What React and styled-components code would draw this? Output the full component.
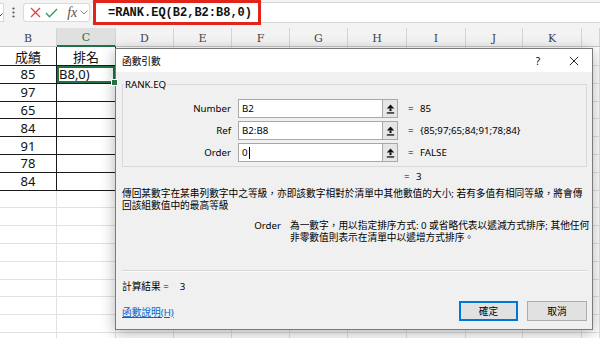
import React from "react";
import styled, { createGlobalStyle } from "styled-components";

const GlobalStyle = createGlobalStyle`
  html, body { margin: 0; padding: 0; background: #fff; overflow: hidden; }
  #root { width: 600px; height: 338px; }
`;

const Screen = styled.div`
  position: relative;
  width: 600px;
  height: 338px;
  overflow: hidden;
  background: #fff;
`;

/* ---------- formula bar ---------- */
const Top = styled.div`
  background: #f3f3f3;
`;

const FormulaBar = styled.div`
  display: flex;
  align-items: center;
  height: 25px;
`;

const NameBoxTip = styled.div`
  width: 4px;
  height: 19px;
  background: #fff;
  border: 1px solid #d6d6d6;
  border-left: none;
  box-sizing: border-box;
  display: flex;
  align-items: center;
  overflow: hidden;
`;

const Dots = styled.div`
  width: 19px;
  display: flex;
  justify-content: center;
`;

const FxBox = styled.div`
  display: flex;
  align-items: center;
  width: 67px;
  height: 19px;
  box-sizing: border-box;
  background: #fff;
  border: 1px solid #dadada;
  border-radius: 3px;
  padding-left: 5px;
`;

const IconSlot = styled.span`
  display: inline-flex;
  align-items: center;
  justify-content: center;
  width: ${(p) => p.$w}px;
`;

const FxText = styled.span`
  font-family: "Liberation Serif", serif;
  font-style: italic;
  font-size: 14px;
  color: #555;
  width: 16px;
  text-align: center;
  margin-left: 4px;
`;

const FormulaInput = styled.div`
  flex: 1;
  height: 21px;
  margin-left: 2px;
  background: #fff;
  border-top: 1px solid #d6d6d6;
  border-bottom: 1px solid #d6d6d6;
  box-sizing: border-box;
  display: flex;
  align-items: center;
`;

const FormulaHighlight = styled.div`
  flex: none;
  width: 168px;
  height: 25px;
  margin-left: 1px;
  box-sizing: border-box;
  border: 3px solid #e1251b;
  padding-left: 12px;
  display: flex;
  align-items: center;
  font-family: "Liberation Mono", monospace;
  font-weight: bold;
  font-size: 12px;
  color: #111;
  white-space: nowrap;
`;

/* ---------- sheet ---------- */
const Sheet = styled.div`
  display: grid;
  grid-template-columns: 57px 59px 58px 58px 58px 58px 59px 59px 57px 59px 1fr;
  grid-template-rows: 19px 19px repeat(16, 17.8px);
  padding-top: 3px;
  background: #f3f3f3;
`;

const HeaderCell = styled.div`
  display: flex;
  align-items: center;
  justify-content: center;
  padding-top: 2px;
  box-sizing: border-box;
  background: ${(p) => (p.$active ? "#e0e0e0" : "#f3f3f3")};
  border-right: 1px solid #d4d4d4;
  border-bottom: ${(p) => (p.$active ? "2px solid #217346" : "1px solid #c6c6c6")};
  font-family: "DejaVu Serif", serif;
  font-size: 11px;
  color: ${(p) => (p.$active ? "#217346" : "#444")};
`;

const Cell = styled.div`
  position: relative;
  display: flex;
  align-items: center;
  justify-content: ${(p) => (p.$left ? "flex-start" : "center")};
  padding-left: ${(p) => (p.$left ? "2px" : "0")};
  box-sizing: border-box;
  background: #fff;
  border-right: 1px solid ${(p) => (p.$table ? "#1a1a1a" : "#e1e1e1")};
  border-bottom: 1px solid ${(p) => (p.$table ? "#1a1a1a" : "#e1e1e1")};
  font-family: "Noto Sans", "Noto Sans CJK TC", sans-serif;
  font-size: 13px;
  color: #111;
  white-space: nowrap;
  ${(p) =>
    p.$selected &&
    `
    box-shadow: inset 0 0 0 2px #217346;
    &::after {
      content: "";
      position: absolute;
      right: -3px;
      bottom: -3px;
      width: 5px;
      height: 5px;
      background: #217346;
      border: 1px solid #fff;
      z-index: 2;
    }
  `}
`;

/* ---------- dialog ---------- */
const Dialog = styled.div`
  position: absolute;
  left: 115px;
  top: 48px;
  width: 478px;
  height: 282px;
  box-sizing: border-box;
  border: 1px solid #7a7a7a;
  background: #f0f0f0;
  box-shadow: 0 3px 14px rgba(0, 0, 0, 0.3);
  display: flex;
  flex-direction: column;
  font-family: "Noto Sans", "Noto Sans CJK TC", sans-serif;
  font-size: 9.7px;
  color: #000;
`;

const TitleBar = styled.div`
  height: 23px;
  flex: none;
  background: #fff;
  display: flex;
  align-items: center;
  padding-left: 6px;
`;

const TitleText = styled.span`
  flex: 1;
`;

const TitleButton = styled.span`
  width: 36px;
  display: flex;
  justify-content: center;
  align-items: center;
  font-size: 10px;
`;

const Body = styled.div`
  flex: 1;
  display: flex;
  flex-direction: column;
  padding: 6px 5px 7px 6px;
`;

const Group = styled.fieldset`
  margin: 0;
  padding: 8px 0 4px 0;
  border: 1px solid #d9d9d9;
  display: flex;
  flex-direction: column;
  gap: 3px;
`;

const Legend = styled.legend`
  padding: 0 1px;
  margin-left: 1px;
  line-height: 13px;
`;

const ArgRow = styled.div`
  display: flex;
  align-items: center;
  height: 19px;
`;

const ArgLabel = styled.span`
  width: 108px;
  text-align: right;
  margin-right: 7px;
`;

const ArgInput = styled.div`
  width: 144px;
  height: 19px;
  box-sizing: border-box;
  background: #fff;
  border: 1px solid #a8a8a8;
  border-right: none;
  display: flex;
  align-items: center;
  padding-left: 3px;
`;

const Caret = styled.span`
  display: inline-block;
  width: 1px;
  height: 12px;
  background: #000;
  margin-left: 1px;
`;

const CollapseButton = styled.div`
  width: 16px;
  height: 19px;
  box-sizing: border-box;
  background: #e6e6e6;
  border: 1px solid #a8a8a8;
  display: flex;
  align-items: center;
  justify-content: center;
`;

const ArgValue = styled.span`
  margin-left: 10px;
  white-space: nowrap;
`;

const Eq = styled.span`
  display: inline-block;
  width: 12px;
`;

const ResultRow = styled.div`
  height: 12px;
  margin-top: 3px;
  padding-left: 282px;
  display: flex;
  align-items: center;
`;

const Desc = styled.div`
  margin-top: 6px;
  line-height: 12px;
`;

const Line = styled.div`
  white-space: nowrap;
`;

const ArgDesc = styled.div`
  display: flex;
  margin-top: 8px;
  line-height: 12px;
`;

const ArgDescName = styled.span`
  width: 159px;
  text-align: right;
  margin-right: 9px;
  flex: none;
`;

const Separator = styled.div`
  margin-top: 26px;
  border-top: 1px solid #d7d7d7;
  border-bottom: 1px solid #fbfbfb;
`;

const Formula = styled.div`
  margin-top: 9px;
  line-height: 12px;
  display: flex;
`;

const ResultNum = styled.span`
  margin-left: 11px;
`;

const Footer = styled.div`
  margin-top: 8px;
  display: flex;
  align-items: center;
`;

const Link = styled.a`
  flex: 1;
  color: #0066cc;
  text-decoration: underline;
  margin-top: 2px;
`;

const Button = styled.button`
  width: ${(p) => p.$w}px;
  height: 20px;
  margin-left: ${(p) => p.$ml || 0}px;
  box-sizing: border-box;
  background: #e1e1e1;
  border: ${(p) => (p.$primary ? "2px solid #0078d7" : "1px solid #adadad")};
  font-family: "Noto Sans CJK TC", sans-serif;
  font-size: 9.7px;
  color: #000;
  padding: 0;
`;

/* ---------- icons ---------- */
const Chevron = ({ color = "#666" }) => (
  <svg width="8" height="5" viewBox="0 0 8 5">
    <path d="M0.5 0.5 L4 4 L7.5 0.5" fill="none" stroke={color} strokeWidth="1" />
  </svg>
);

const VDots = () => (
  <svg width="3" height="11" viewBox="0 0 3 11">
    <circle cx="1.5" cy="1.5" r="1.1" fill="#555" />
    <circle cx="1.5" cy="5.5" r="1.1" fill="#555" />
    <circle cx="1.5" cy="9.5" r="1.1" fill="#555" />
  </svg>
);

const CrossIcon = ({ size = 11, color = "#e0443e", w = 1.3 }) => (
  <svg width={size} height={size} viewBox="0 0 11 11">
    <path d="M1 1 L10 10 M10 1 L1 10" stroke={color} strokeWidth={w} fill="none" />
  </svg>
);

const CheckIcon = () => (
  <svg width="13" height="10" viewBox="0 0 13 10">
    <path d="M1 5 L4.5 8.8 L12 1" stroke="#3a9a52" strokeWidth="1.3" fill="none" />
  </svg>
);

const UpIcon = () => (
  <svg width="9" height="10" viewBox="0 0 9 10">
    <path d="M4.5 0.5 L8.2 4.6 L0.8 4.6 Z" fill="#111" />
    <rect x="3.5" y="4.5" width="2" height="2.6" fill="#111" />
    <rect x="0.8" y="8.3" width="7.4" height="1.3" fill="#111" />
  </svg>
);

const COLS = ["B", "C", "D", "E", "F", "G", "H", "I", "J", "K", ""];
const DATA = [
  ["成績", "排名"],
  ["85", "B8,0)"],
  ["97", ""],
  ["65", ""],
  ["84", ""],
  ["91", ""],
  ["78", ""],
  ["84", ""],
];
const TOTAL_ROWS = 17;

const args = [
  { name: "Number", value: "B2", result: "85" },
  { name: "Ref", value: "B2:B8", result: "{85;97;65;84;91;78;84}" },
  { name: "Order", value: "0", result: "FALSE", caret: true },
];

export default function App() {
  const rows = [];
  for (let r = 0; r < TOTAL_ROWS; r++) {
    COLS.forEach((_, c) => {
      const inTable = r < DATA.length && c < 2;
      const text = inTable ? DATA[r][c] : "";
      const selected = r === 1 && c === 1;
      rows.push(
        <Cell key={`${r}-${c}`} $table={inTable} $selected={selected} $left={selected}>
          {text}
        </Cell>
      );
    });
  }

  return (
    <Screen>
      <GlobalStyle />
      <Top>
        <FormulaBar>
          <NameBoxTip>
            <span style={{ marginLeft: -5 }}>
              <Chevron color="#444" />
            </span>
          </NameBoxTip>
          <Dots>
            <VDots />
          </Dots>
          <FxBox>
            <IconSlot $w={14}>
              <CrossIcon />
            </IconSlot>
            <IconSlot $w={20}>
              <CheckIcon />
            </IconSlot>
            <FxText>fx</FxText>
            <IconSlot $w={10}>
              <Chevron color="#888" />
            </IconSlot>
          </FxBox>
          <FormulaInput>
            <FormulaHighlight>=RANK.EQ(B2,B2:B8,0)</FormulaHighlight>
          </FormulaInput>
        </FormulaBar>
      </Top>

      <Sheet>
        {COLS.map((l, i) => (
          <HeaderCell key={i} $active={l === "C"}>
            {l}
          </HeaderCell>
        ))}
        {rows}
      </Sheet>

      <Dialog>
        <TitleBar>
          <TitleText>函數引數</TitleText>
          <TitleButton>?</TitleButton>
          <TitleButton>
            <CrossIcon size={10} color="#111" w={1} />
          </TitleButton>
        </TitleBar>
        <Body>
          <Group>
            <Legend>RANK.EQ</Legend>
            {args.map((a) => (
              <ArgRow key={a.name}>
                <ArgLabel>{a.name}</ArgLabel>
                <ArgInput>
                  {a.value}
                  {a.caret && <Caret />}
                </ArgInput>
                <CollapseButton>
                  <UpIcon />
                </CollapseButton>
                <ArgValue>
                  <Eq>=</Eq>
                  {a.result}
                </ArgValue>
              </ArgRow>
            ))}
          </Group>
          <ResultRow>
            <Eq>=</Eq>3
          </ResultRow>
          <Desc>
            <Line>傳回某數字在某串列數字中之等級，亦即該數字相對於清單中其他數值的大小; 若有多值有相同等級，將會傳</Line>
            <Line>回該組數值中的最高等級</Line>
          </Desc>
          <ArgDesc>
            <ArgDescName>Order</ArgDescName>
            <div>
              <Line>為一數字，用以指定排序方式: 0 或省略代表以遞減方式排序; 其他任何</Line>
              <Line>非零數值則表示在清單中以遞增方式排序。</Line>
            </div>
          </ArgDesc>
          <Separator />
          <Formula>
            計算結果 =<ResultNum>3</ResultNum>
          </Formula>
          <Footer>
            <Link href="#">函數說明(H)</Link>
            <Button $w={59} $primary>
              確定
            </Button>
            <Button $w={60} $ml={9}>
              取消
            </Button>
          </Footer>
        </Body>
      </Dialog>
    </Screen>
  );
}
